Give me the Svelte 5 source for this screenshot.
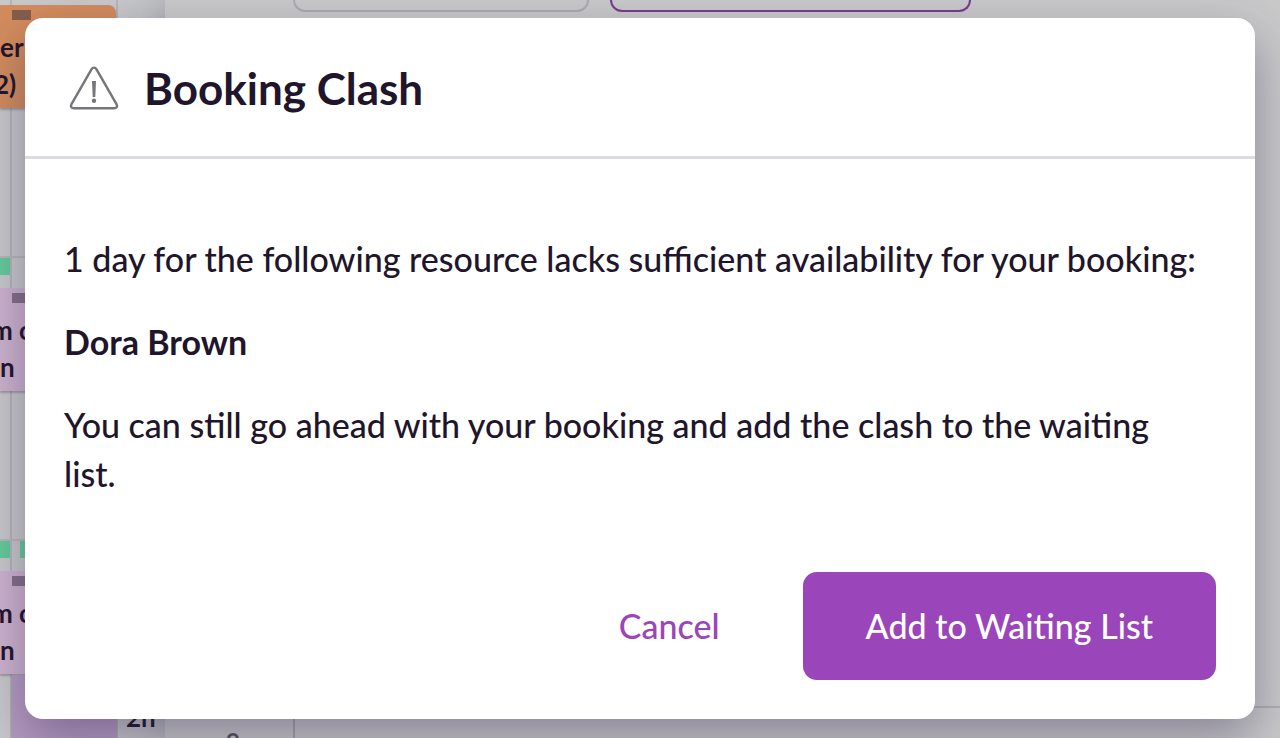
<script>
  const rows = [
    {
      tone: "orange",
      lines: [
        { text: "er", start: 0 },
        { text: "2)", start: -6 },
      ],
      free: [],
    },
    {
      tone: "pink",
      lines: [
        { text: "m c", start: -9 },
        { text: "n", start: 0 },
      ],
      free: ["first"],
    },
    {
      tone: "pink",
      lines: [
        { text: "m c", start: -9 },
        { text: "n", start: 0 },
      ],
      free: ["first", "second"],
      following: true,
    },
  ];

  let open = $state(true);

  function close() {
    open = false;
  }
</script>

<div class="page">
  <div class="schedule">
    {#each rows as row}
      <section class="row">
        <div class="availability">
          {#each row.free as slot}
            <span class={["slot", slot]}></span>
          {/each}
        </div>
        <article class={["event", row.tone]}>
          <span class="handle"></span>
          {#each row.lines as line}
            <p style={`margin-left: ${line.start}px;`}>{line.text}</p>
          {/each}
        </article>
        {#if row.following}
          <div class="following">
            <div class="event purple"></div>
            <span class="hours">2h</span>
          </div>
        {/if}
      </section>
    {/each}
  </div>

  <main class="panel">
    <div class="fields">
      <span class="field"></span>
      <span class="field selected"></span>
    </div>
    <div class="times">
      <span class="time">9</span>
      <span class="track"></span>
    </div>
  </main>

  {#if open}
    <div class="backdrop">
      <div class="dialog" role="dialog" aria-modal="true" aria-labelledby="dialog-title">
        <header>
          <svg viewBox="0 0 50 46" width="50" height="46" aria-hidden="true">
            <path
              d="M22.6 4.1 2.5 39.2C1.2 41.5 2.4 43.2 5 43.2H45C47.6 43.2 48.8 41.5 47.5 39.2L27.4 4.1C26.2 2.1 23.8 2.1 22.6 4.1Z"
              fill="none"
              stroke="#77757a"
              stroke-width="2.4"
            />
            <path d="M23 16H27L26.3 32H23.7Z" fill="#77757a" />
            <circle cx="25" cy="35.7" r="2.2" fill="#77757a" />
          </svg>
          <h1 id="dialog-title">Booking Clash</h1>
        </header>
        <div class="content">
          <p>1 day for the following resource lacks sufficient availability for your booking:</p>
          <p><strong>Dora Brown</strong></p>
          <p>You can still go ahead with your booking and add the clash to the waiting list.</p>
        </div>
        <footer>
          <button class="cancel" onclick={close}>Cancel</button>
          <button class="confirm" onclick={close}>Add to Waiting List</button>
        </footer>
      </div>
    </div>
  {/if}
</div>

<style>
  :global(body) {
    margin: 0;
    background: #c9c9ca;
  }

  .page {
    position: relative;
    display: flex;
    height: 100vh;
    overflow: hidden;
    font-family: Lato, sans-serif;
    color: #21152b;
  }

  p,
  h1 {
    margin: 0;
  }

  .schedule {
    flex: none;
    width: 165px;
    /* scrolled part way into the first row */
    margin-top: -27px;
    background:
      linear-gradient(#b5b5b9, #b5b5b9) 10px 0 / 2px 100% no-repeat,
      linear-gradient(#b5b5b9, #b5b5b9) 116px 0 / 2px 100% no-repeat,
      #c8c9cb;
  }

  .row {
    box-sizing: border-box;
    height: 283px;
    border-top: 2px solid #b8b8bb;
  }

  .availability {
    display: flex;
    gap: 10px;
    height: 17px;
    margin-bottom: 13px;
  }

  .slot {
    width: 10px;
    background: #65cb9b;
  }

  .slot.second {
    width: 96px;
  }

  .event {
    box-sizing: border-box;
    width: 116px;
    height: 103px;
    padding-top: 5px;
    border-radius: 0 8px 8px 0;
    box-shadow: 0 2px 2px rgba(60, 50, 70, 0.3);
    font: bold 26px/37px Lato, sans-serif;
    white-space: nowrap;
  }

  .handle {
    display: block;
    width: 19px;
    height: 10px;
    margin: 0 0 9px 12px;
    background: rgba(55, 45, 60, 0.5);
  }

  .orange {
    background: #d38c5d;
  }

  .pink {
    background: #cdb3cf;
  }

  .following {
    display: flex;
    gap: 10px;
    padding: 1px 0 0 12px;
  }

  .purple {
    width: 104px;
    border-radius: 0;
    background: #b69bc2;
  }

  .hours {
    padding-top: 24px;
    font: bold 26px/36px Lato, sans-serif;
  }

  .panel {
    flex: 1;
    display: flex;
    flex-direction: column;
    justify-content: space-between;
    background: #c9c9ca;
    box-shadow: 0 0 40px rgba(44, 35, 72, 0.3);
  }

  .fields {
    display: flex;
    gap: 21px;
    padding: 0 309px 0 128px;
  }

  .field {
    box-sizing: border-box;
    flex: 296;
    height: 12px;
    border: 2px solid #ababb1;
    border-top: 0;
    border-radius: 0 0 14px 14px;
  }

  .field.selected {
    flex: 362;
    border-color: #793b91;
  }

  .times {
    display: flex;
    height: 30px;
    border-top: 2px solid #b0b0b5;
    overflow: hidden;
  }

  .time {
    box-sizing: border-box;
    width: 130px;
    padding: 20px 0 0 8px;
    border-right: 2px solid #a7a6ad;
    text-align: center;
    font: bold 24px/28px Lato, sans-serif;
    color: #55515c;
  }

  .track {
    flex: 1;
  }

  .backdrop {
    position: absolute;
    inset: 0;
    padding: 18px 25px;
  }

  .dialog {
    border-radius: 18px;
    background: #fff;
    box-shadow: 0 20px 50px rgba(44, 35, 72, 0.4);
  }

  header {
    display: flex;
    align-items: center;
    gap: 25px;
    padding: 43px 44px 41px;
    border-bottom: 3px solid #dcdbe0;
  }

  h1 {
    font: bold 44px/54px Lato, sans-serif;
  }

  .content {
    display: flex;
    flex-direction: column;
    gap: 34px;
    padding: 75px 54px 74px 39px;
    font: 500 34px/49px Lato, sans-serif;
  }

  footer {
    display: flex;
    justify-content: flex-end;
    gap: 20px;
    padding: 0 39px 39px;
  }

  button {
    padding: 29px 63px;
    border: 0;
    border-radius: 14px;
    font: 500 34px/50px Lato, sans-serif;
    cursor: pointer;
  }

  .cancel {
    background: none;
    color: #9b45ba;
  }

  .confirm {
    background: #9b45ba;
    color: #fff;
  }
</style>
